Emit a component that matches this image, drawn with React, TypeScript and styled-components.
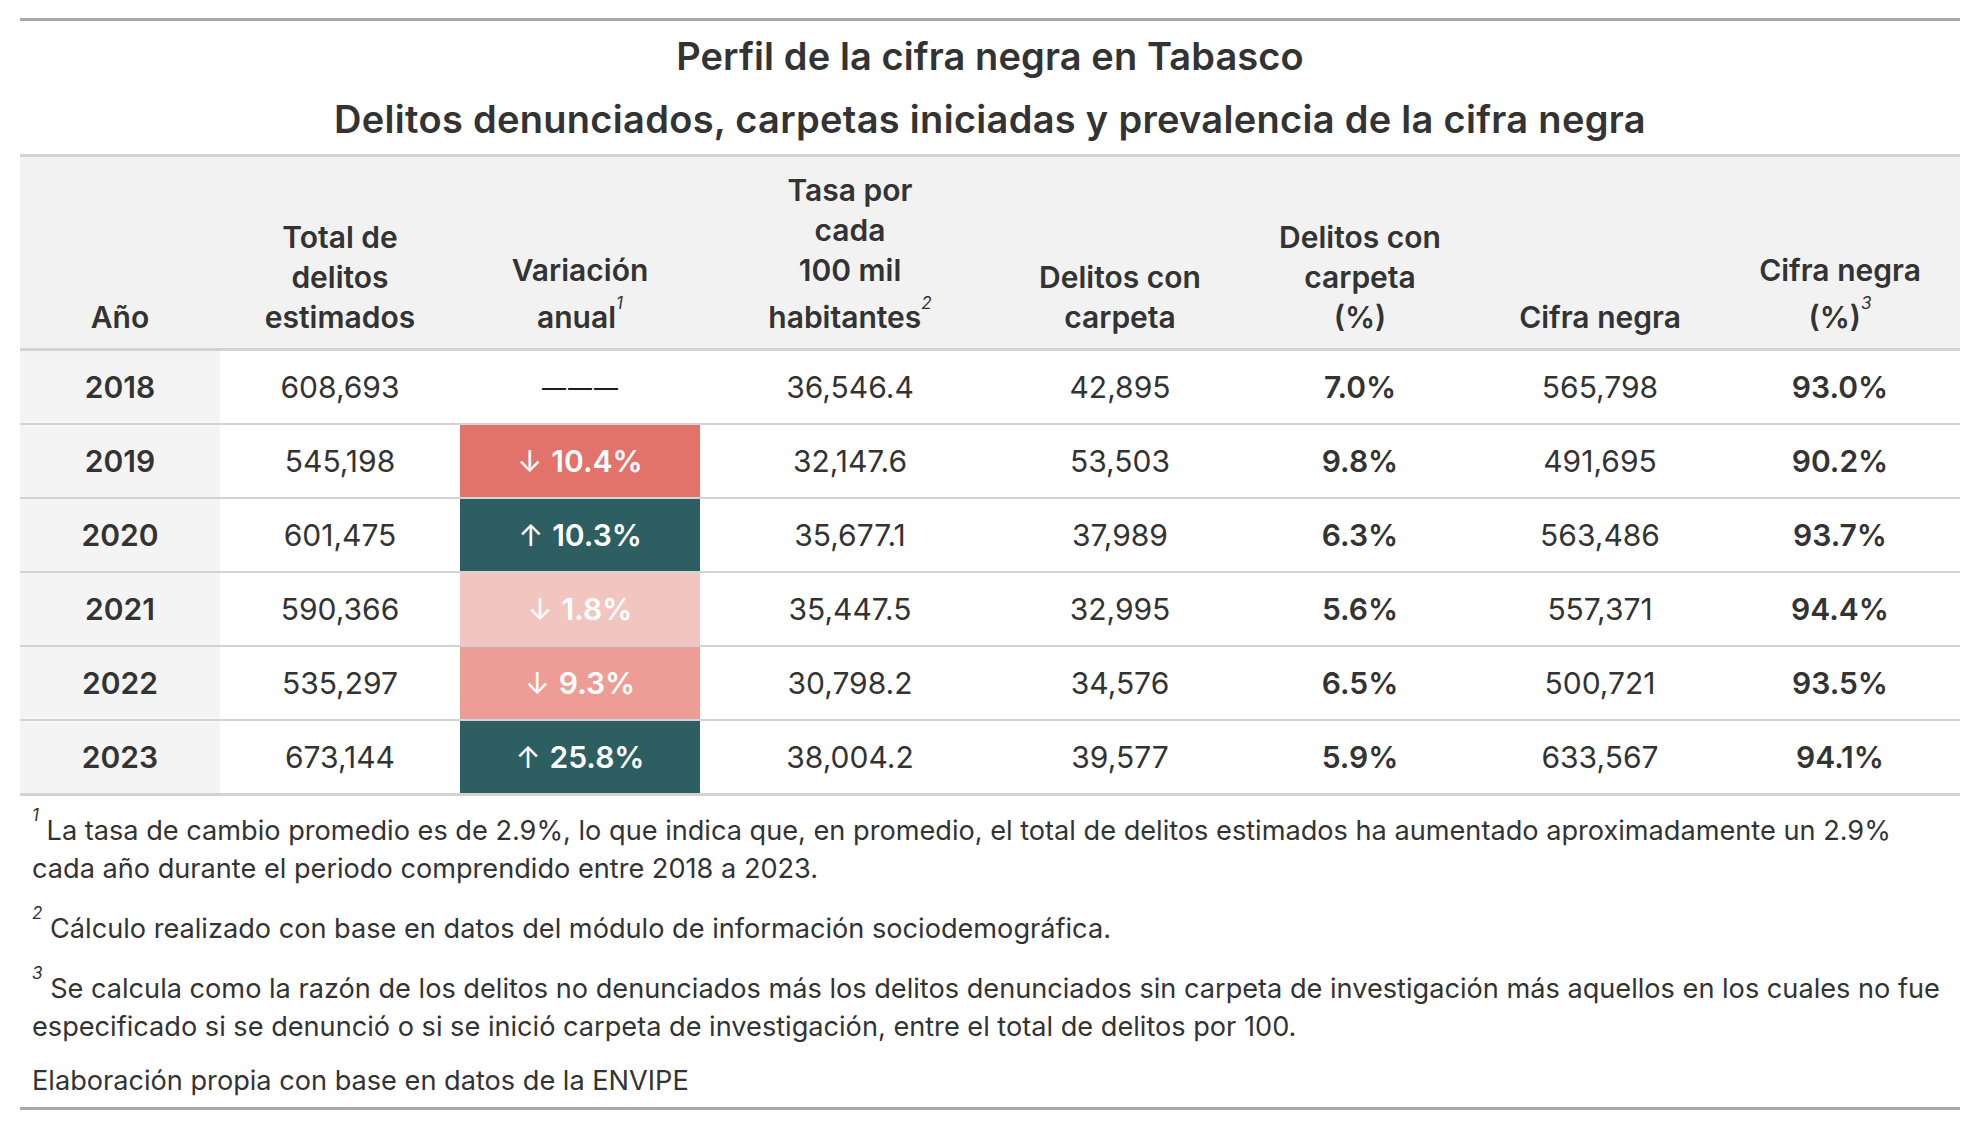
import React from 'react';
import styled, { createGlobalStyle } from 'styled-components';

const GlobalStyle = createGlobalStyle`
  html, body { margin: 0; padding: 0; background: #ffffff; }
  body { font-family: Inter, "Noto Sans", sans-serif; color: #333333; }
`;

const Page = styled.div`
  padding: 18px 20px 0;
  width: 1940px;
`;

const Figure = styled.section`
  border-top: 3px solid #a8a8a8;
  border-bottom: 3px solid #a8a8a8;
`;

const Heading = styled.header`
  border-bottom: 3px solid #d3d3d3;
  padding: 4px 0 3px;
  text-align: center;
`;

const TitleLine = styled.div<{ $spacing?: number }>`
  font-size: 38px;
  font-weight: 600;
  line-height: 63px;
  letter-spacing: ${(p) => p.$spacing ?? 0}px;
  color: #333333;
  white-space: nowrap;
`;

const COLS = '200px 240px 240px 300px 240px 240px 240px 240px';

const HeaderRow = styled.div`
  display: grid;
  grid-template-columns: ${COLS};
  height: 191px;
  background: #f2f2f2;
  border-bottom: 3px solid #d3d3d3;
`;

const HeaderCell = styled.div`
  display: flex;
  flex-direction: column;
  justify-content: flex-end;
  align-items: center;
  padding-bottom: 11px;
  font-size: 30px;
  font-weight: 600;
  color: #333333;
`;

const HeaderLine = styled.span<{ $sup?: boolean }>`
  display: block;
  line-height: 40px;
  white-space: nowrap;
  margin-top: ${(p) => (p.$sup ? '7px' : '0')};
`;

const Sup = styled.span`
  font-size: 17px;
  font-style: italic;
  font-weight: 400;
  line-height: 0;
  vertical-align: 19px;
  color: #333333;
`;

const Row = styled.div<{ $last?: boolean }>`
  display: grid;
  grid-template-columns: ${COLS};
  height: 72px;
  border-bottom: ${(p) => (p.$last ? '3px' : '2px')} solid #d3d3d3;
`;

const Cell = styled.div<{ $bold?: boolean; $stub?: boolean }>`
  display: flex;
  align-items: center;
  justify-content: center;
  font-size: 30px;
  font-weight: ${(p) => (p.$bold || p.$stub ? 600 : 400)};
  background: ${(p) => (p.$stub ? '#f4f4f4' : 'transparent')};
  color: #333333;
  white-space: nowrap;
`;

const VarCell = styled.div<{ $bg: string }>`
  display: flex;
  align-items: center;
  justify-content: center;
  gap: 9px;
  font-size: 30px;
  font-weight: 600;
  background: ${(p) => p.$bg};
  color: #ffffff;
  white-space: nowrap;
`;

const Arrow = styled.span`
  font-weight: 400;
`;

const Dashes = styled.span`
  color: #1e1e1e;
  font-size: 24px;
  font-weight: 400;
  letter-spacing: 2px;
  padding-left: 2px;
`;

const Notes = styled.footer`
  padding: 16px 12px 7px;
  font-size: 27.15px;
  color: #333333;
`;

const Note = styled.div<{ $gap: number }>`
  margin-top: ${(p) => p.$gap}px;
`;

const NoteLine = styled.span`
  display: block;
  line-height: 38px;
  white-space: nowrap;
`;

type Trend = 'none' | 'down' | 'up';

interface DataRow {
  year: string;
  total: string;
  variation: string;
  trend: Trend;
  color: string;
  rate: string;
  withFile: string;
  pctFile: string;
  dark: string;
  pctDark: string;
}

const rows: DataRow[] = [
  { year: '2018', total: '608,693', variation: '', trend: 'none', color: 'transparent', rate: '36,546.4', withFile: '42,895', pctFile: '7.0%', dark: '565,798', pctDark: '93.0%' },
  { year: '2019', total: '545,198', variation: '10.4%', trend: 'down', color: '#e1736b', rate: '32,147.6', withFile: '53,503', pctFile: '9.8%', dark: '491,695', pctDark: '90.2%' },
  { year: '2020', total: '601,475', variation: '10.3%', trend: 'up', color: '#2c5e62', rate: '35,677.1', withFile: '37,989', pctFile: '6.3%', dark: '563,486', pctDark: '93.7%' },
  { year: '2021', total: '590,366', variation: '1.8%', trend: 'down', color: '#f2c5c0', rate: '35,447.5', withFile: '32,995', pctFile: '5.6%', dark: '557,371', pctDark: '94.4%' },
  { year: '2022', total: '535,297', variation: '9.3%', trend: 'down', color: '#ed9d95', rate: '30,798.2', withFile: '34,576', pctFile: '6.5%', dark: '500,721', pctDark: '93.5%' },
  { year: '2023', total: '673,144', variation: '25.8%', trend: 'up', color: '#2c5e62', rate: '38,004.2', withFile: '39,577', pctFile: '5.9%', dark: '633,567', pctDark: '94.1%' },
];

const headers: { lines: React.ReactNode[]; supLast?: boolean }[] = [
  { lines: ['Año'] },
  { lines: ['Total de', 'delitos', 'estimados'] },
  { lines: ['Variación', <>anual<Sup>1</Sup></>], supLast: true },
  { lines: ['Tasa por', 'cada', '100 mil', <>habitantes<Sup>2</Sup></>], supLast: true },
  { lines: ['Delitos con', 'carpeta'] },
  { lines: ['Delitos con', 'carpeta', '(%)'] },
  { lines: ['Cifra negra'] },
  { lines: ['Cifra negra', <>(%)<Sup>3</Sup></>], supLast: true },
];

export default function App() {
  return (
    <>
      <GlobalStyle />
      <Page>
        <Figure>
          <Heading>
            <TitleLine $spacing={0.1}>Perfil de la cifra negra en Tabasco</TitleLine>
            <TitleLine $spacing={0.3}>Delitos denunciados, carpetas iniciadas y prevalencia de la cifra negra</TitleLine>
          </Heading>
          <HeaderRow>
            {headers.map((h, i) => (
              <HeaderCell key={i}>
                {h.lines.map((l, j) => (
                  <HeaderLine key={j} $sup={h.supLast && j === h.lines.length - 1}>
                    {l}
                  </HeaderLine>
                ))}
              </HeaderCell>
            ))}
          </HeaderRow>
          {rows.map((r, i) => (
            <Row key={r.year} $last={i === rows.length - 1}>
              <Cell $stub>{r.year}</Cell>
              <Cell>{r.total}</Cell>
              {r.trend === 'none' ? (
                <Cell>
                  <Dashes>———</Dashes>
                </Cell>
              ) : (
                <VarCell $bg={r.color}>
                  <Arrow>{r.trend === 'down' ? '↓' : '↑'}</Arrow>
                  <span>{r.variation}</span>
                </VarCell>
              )}
              <Cell>{r.rate}</Cell>
              <Cell>{r.withFile}</Cell>
              <Cell $bold>{r.pctFile}</Cell>
              <Cell>{r.dark}</Cell>
              <Cell $bold>{r.pctDark}</Cell>
            </Row>
          ))}
          <Notes>
            <Note $gap={0}>
              <NoteLine>
                <Sup>1</Sup> La tasa de cambio promedio es de 2.9%, lo que indica que, en promedio, el total de delitos estimados ha aumentado aproximadamente un 2.9%
              </NoteLine>
              <NoteLine>cada año durante el periodo comprendido entre 2018 a 2023.</NoteLine>
            </Note>
            <Note $gap={22}>
              <NoteLine>
                <Sup>2</Sup> Cálculo realizado con base en datos del módulo de información sociodemográfica.
              </NoteLine>
            </Note>
            <Note $gap={22}>
              <NoteLine>
                <Sup>3</Sup> Se calcula como la razón de los delitos no denunciados más los delitos denunciados sin carpeta de investigación más aquellos en los cuales no fue
              </NoteLine>
              <NoteLine>especificado si se denunció o si se inició carpeta de investigación, entre el total de delitos por 100.</NoteLine>
            </Note>
            <Note $gap={16}>
              <NoteLine>Elaboración propia con base en datos de la ENVIPE</NoteLine>
            </Note>
          </Notes>
        </Figure>
      </Page>
    </>
  );
}
